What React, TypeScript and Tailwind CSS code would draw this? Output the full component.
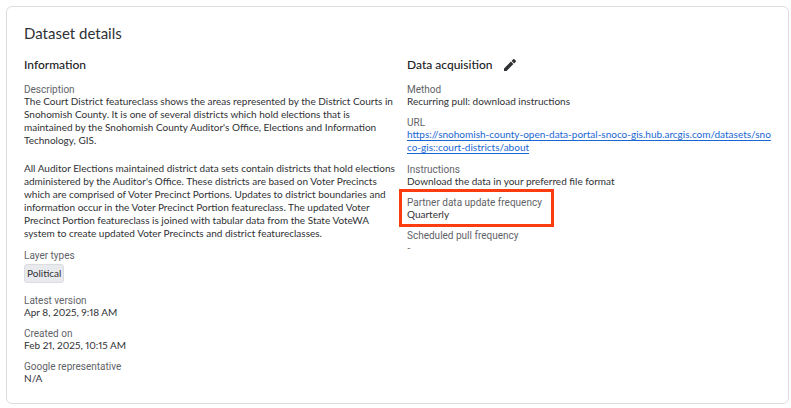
import type { ReactNode } from "react";

function Field({ label, children }: { label: string; children: ReactNode }) {
  return (
    <div>
      <dt className="font-[Roboto,sans-serif] text-[10px] leading-[11px] text-[#5f6368]">{label}</dt>
      <dd>{children}</dd>
    </div>
  );
}

const heading = "flex h-[18px] items-center gap-[12px] text-[12px] font-medium leading-[18px] text-[#202124]";
const list = "mt-[10px] flex flex-col gap-[9px] whitespace-nowrap";

export default function App() {
  return (
    <main className="bg-white pt-[6px] pr-[2px] pb-[4px] pl-[6px] font-[Lato,sans-serif] text-[10px] leading-[13px] text-[#303134]">
      <section className="rounded-[6px] border border-[#dadce0] px-[17px] pt-[16px] pb-[18px]">
        <h1 className="text-[15px] leading-[20px]">Dataset details</h1>
        <div className="mt-[13px] grid grid-cols-2 gap-x-[19px]">
          <section className="min-w-0">
            <h2 className={heading}>Information</h2>
            <dl className={list}>
              <Field label="Description">
                <p>
                  The Court District featureclass shows the areas represented by the District Courts in
                  <br />
                  Snohomish County. It is one of several districts which hold elections that is
                  <br />
                  maintained by the Snohomish County Auditor's Office, Elections and Information
                  <br />
                  Technology, GIS.
                </p>
                <p className="mt-[15px] pb-px">
                  All Auditor Elections maintained district data sets contain districts that hold elections
                  <br />
                  administered by the Auditor's Office. These districts are based on Voter Precincts
                  <br />
                  which are comprised of Voter Precinct Portions. Updates to district boundaries and
                  <br />
                  information occur in the Voter Precinct Portion featureclass. The updated Voter
                  <br />
                  Precinct Portion featureclass is joined with tabular data from the State VoteWA
                  <br />
                  system to create updated Voter Precincts and district featureclasses.
                </p>
              </Field>
              <Field label="Layer types">
                <span className="my-[3px] flex h-[19px] w-fit items-center rounded-[3px] border border-[#dadce0] bg-[#e8eaed] px-[2px]">
                  Political
                </span>
              </Field>
              <Field label="Latest version">
                <span className="proportional-nums">Apr 8, 2025, 9:18 AM</span>
              </Field>
              <Field label="Created on">
                <span className="proportional-nums">Feb 21, 2025, 10:15 AM</span>
              </Field>
              <Field label="Google representative">N/A</Field>
            </dl>
          </section>
          <section className="min-w-0">
            <div className={heading}>
              <h2>Data acquisition</h2>
              <button type="button" aria-label="Edit data acquisition">
                <svg viewBox="0 0 12 12" className="size-[12px] fill-[#303134]">
                  <path d="M0 9.5V12h2.5l6.9-6.9-2.5-2.5zM11.7 2.8a.9.9 0 0 0 0-1.2L10.4.3a.9.9 0 0 0-1.2 0L7.6 1.9l2.5 2.5z" />
                </svg>
              </button>
            </div>
            <dl className={list}>
              <Field label="Method">Recurring pull: download instructions</Field>
              <Field label="URL">
                <a
                  href="https://snohomish-county-open-data-portal-snoco-gis.hub.arcgis.com/datasets/snoco-gis::court-districts/about"
                  className="block pb-px text-[#1967d2] underline underline-offset-2"
                >
                  https://snohomish-county-open-data-portal-snoco-gis.hub.arcgis.com/datasets/sno
                  <br />
                  co-gis::court-districts/about
                </a>
              </Field>
              <Field label="Instructions">Download the data in your preferred file format</Field>
              <div className="-mx-[8px] -mt-[8px] -mb-[6px] w-fit border-[3px] border-[#fa3c0f] pt-[5px] pr-[9px] pb-[3px] pl-[5px]">
                <Field label="Partner data update frequency">Quarterly</Field>
              </div>
              <Field label="Scheduled pull frequency">
                <span className="text-[#5f6368]">-</span>
              </Field>
            </dl>
          </section>
        </div>
      </section>
    </main>
  );
}
